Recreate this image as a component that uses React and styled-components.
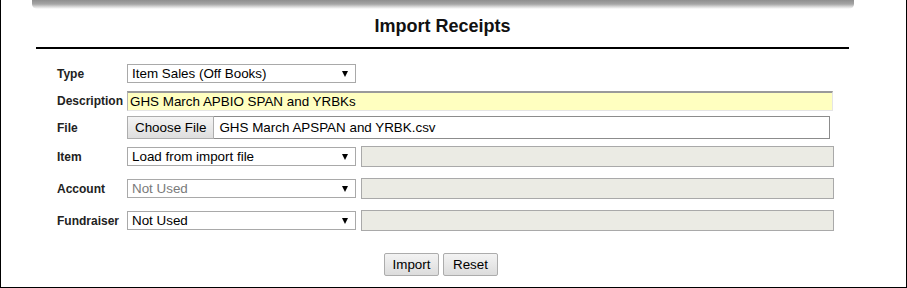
import React from 'react'
import styled, { createGlobalStyle } from 'styled-components'

const GlobalStyle = createGlobalStyle`
  html, body {
    margin: 0;
    padding: 0;
    background: #fff;
  }
  body {
    font-family: "Liberation Sans", Arial, sans-serif;
    color: #000;
  }
`

const Frame = styled.div`
  width: 907px;
  height: 288px;
  box-sizing: border-box;
  border: 1px solid #000;
  border-top: none;
  overflow: hidden;
`

const TopShadow = styled.div`
  margin-left: 31px;
  width: 822px;
  height: 9px;
  background: linear-gradient(#8f8f8f, #a5a5a5 45%, #d8d8d8 75%, #fff);
  border-radius: 0 0 5px 5px;
`

const Panel = styled.div`
  margin-left: 35px;
  width: 813px;
`

const Title = styled.h1`
  margin: 6px 0 0;
  height: 22px;
  line-height: 22px;
  text-align: center;
  font-size: 18px;
  font-weight: bold;
  color: #111;
`

const Rule = styled.div`
  margin-top: 10px;
  height: 2px;
  background: #000;
`

const Form = styled.div`
  padding-left: 21px;
  display: flex;
  flex-direction: column;
`

const Row = styled.div`
  display: flex;
  align-items: center;
  height: ${p => p.$h}px;
  margin-top: ${p => p.$top}px;
`

const Label = styled.div`
  width: 70px;
  flex: none;
  font-size: 12px;
  font-weight: bold;
  color: #222;
`

const Select = styled.div`
  position: relative;
  box-sizing: border-box;
  width: 229px;
  height: 19px;
  border: 1px solid #a9a9a9;
  background: #fff;
  padding-left: 4px;
  font-size: 13.4px;
  line-height: 17px;
  color: ${p => (p.$disabled ? '#7a7a7a' : '#000')};
  flex: none;

  &::after {
    content: '';
    position: absolute;
    right: 7px;
    top: 6px;
    border-left: 3.5px solid transparent;
    border-right: 3.5px solid transparent;
    border-top: 6px solid #000;
  }
`

const TextBox = styled.div`
  box-sizing: border-box;
  width: ${p => p.$w}px;
  height: 20px;
  border-top: 2px solid #9a9a9a;
  border-left: 1px solid #b5b5b5;
  border-right: 1px solid #e5e5e5;
  border-bottom: 1px solid #e5e5e5;
  background: #ffffc0;
  padding-left: 2px;
  font-size: 13.4px;
  line-height: 17px;
`

const FileBox = styled.div`
  box-sizing: border-box;
  width: 703px;
  height: 23px;
  border: 1px solid #8c8c8c;
  background: #fff;
  display: flex;
  align-items: center;
  font-size: 13.4px;
`

const FileButton = styled.div`
  box-sizing: border-box;
  height: 23px;
  margin: -1px 5px 0 -1px;
  padding: 0 7px;
  border: 1px solid #adadad;
  background: linear-gradient(#f4f4f4, #dedede);
  line-height: 21px;
`

const Disabled = styled.div`
  box-sizing: border-box;
  width: 473px;
  height: 21px;
  margin-left: 5px;
  border: 1px solid #a9a9a9;
  background: #ebebe4;
`

const Buttons = styled.div`
  display: flex;
  justify-content: center;
  gap: 4px;
  margin-top: 22px;
  padding-right: 24px;
`

const Button = styled.button`
  box-sizing: border-box;
  width: 55px;
  height: 23px;
  border: 1px solid #acacac;
  border-radius: 2px;
  background: linear-gradient(#f3f3f3, #dcdcdc);
  font-family: "Liberation Sans", Arial, sans-serif;
  font-size: 13.4px;
  color: #000;
  padding: 0;
`

const lookups = [
  { label: 'Item', value: 'Load from import file', top: 7 },
  { label: 'Account', value: 'Not Used', top: 11, disabled: true },
  { label: 'Fundraiser', value: 'Not Used', top: 11 },
]

export default function App() {
  return (
    <>
      <GlobalStyle />
      <Frame>
        <TopShadow />
        <Panel>
          <Title>Import Receipts</Title>
          <Rule />
          <Form>
            <Row $h={19} $top={15}>
              <Label>Type</Label>
              <Select>Item Sales (Off Books)</Select>
            </Row>
            <Row $h={20} $top={8}>
              <Label>Description</Label>
              <TextBox $w={706}>GHS March APBIO SPAN and YRBKs</TextBox>
            </Row>
            <Row $h={23} $top={5}>
              <Label>File</Label>
              <FileBox>
                <FileButton>Choose File</FileButton>
                GHS March APSPAN and YRBK.csv
              </FileBox>
            </Row>
            {lookups.map(item => (
              <Row $h={21} $top={item.top} key={item.label}>
                <Label>{item.label}</Label>
                <Select $disabled={item.disabled}>{item.value}</Select>
                <Disabled />
              </Row>
            ))}
            <Buttons>
              <Button>Import</Button>
              <Button>Reset</Button>
            </Buttons>
          </Form>
        </Panel>
      </Frame>
    </>
  )
}
